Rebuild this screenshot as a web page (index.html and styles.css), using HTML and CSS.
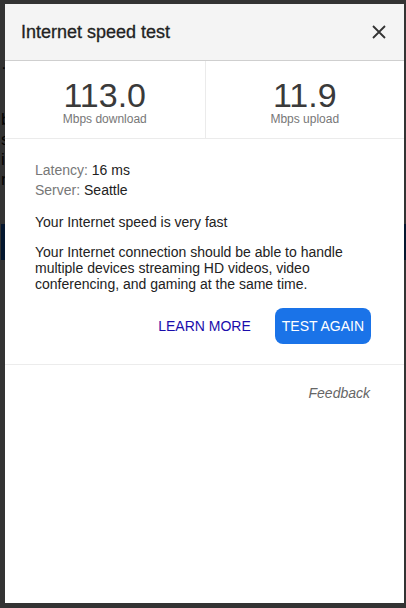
FILE: index.html
```html
<!DOCTYPE html>
<html lang="en">
<head>
  <meta charset="UTF-8" />
  <meta name="viewport" content="width=device-width, initial-scale=1.0"/>
  <title>Internet speed test</title>
  <link rel="stylesheet" href="styles.css">
</head>
<body>

  <!-- halaman di belakang dialog -->
  <div class="page">
    <div class="page-dot">·</div>
    <div class="page-lines">
      <div>b</div>
      <div>s</div>
      <div>i</div>
      <div>r</div>
    </div>
    <div class="page-band"></div>
  </div>

  <!-- dialog speed test -->
  <div class="overlay">
    <div class="dialog">
      <div class="dialog-head">
        <h1>Internet speed test</h1>
        <button class="close" aria-label="Close">
          <svg width="14" height="14" viewBox="0 0 14 14">
            <path d="M1 1 L13 13 M13 1 L1 13" stroke="#333" stroke-width="1.8" fill="none"/>
          </svg>
        </button>
      </div>

      <div class="stats">
        <div class="stat">
          <div class="stat-num">113.0</div>
          <div class="stat-label">Mbps download</div>
        </div>
        <div class="stat">
          <div class="stat-num">11.9</div>
          <div class="stat-label">Mbps upload</div>
        </div>
      </div>

      <div class="result">
        <div class="meta">
          <div><span class="meta-key">Latency:</span> 16 ms</div>
          <div><span class="meta-key">Server:</span> Seattle</div>
        </div>
        <p>Your Internet speed is very fast</p>
        <p>Your Internet connection should be able to handle multiple devices streaming HD videos, video conferencing, and gaming at the same time.</p>
        <div class="actions">
          <a class="learn" href="#">LEARN MORE</a>
          <button class="again">TEST AGAIN</button>
        </div>
      </div>

      <div class="foot">
        <a class="feedback" href="#">Feedback</a>
      </div>
    </div>
  </div>

</body>
</html>
```

FILE: styles.css
```css
body {
  margin: 0;
  font-family: 'Liberation Sans', Arial, sans-serif;
  background: #fff;
  color: #222;
}

.page {
  padding: 58px 0 0 1px;
  font-size: 17px;
  color: #111;
}

.page-dot {
  line-height: 20px;
}

.page-lines {
  margin-top: 32px;
  line-height: 20px;
}

.page-band {
  margin-top: 34px;
  height: 36px;
  background: #1a73e8;
}

.overlay {
  position: fixed;
  top: 0;
  left: 0;
  right: 0;
  bottom: 0;
  background: rgba(0, 0, 0, 0.8);
  display: flex;
  padding: 4px 2px 5px 5px;
}

.dialog {
  flex: 1;
  background: #fff;
  display: flex;
  flex-direction: column;
}

.dialog-head {
  height: 56px;
  background: #f4f4f4;
  border-bottom: 1px solid #cfcfcf;
  display: flex;
  align-items: center;
  justify-content: space-between;
  padding: 0 18px 0 16px;
}

.dialog-head h1 {
  margin: 0;
  font-size: 18px;
  font-weight: normal;
  color: #222;
  -webkit-text-stroke: 0.3px #222;
}

.close {
  border: none;
  background: none;
  padding: 0;
  width: 14px;
  height: 14px;
  display: flex;
  cursor: pointer;
}

.stats {
  display: grid;
  grid-template-columns: 1fr 1fr;
  border-bottom: 1px solid #ebebeb;
}

.stat {
  padding: 17px 0 12px;
  text-align: center;
}

.stat + .stat {
  border-left: 1px solid #ebebeb;
}

.stat-num {
  font-size: 34px;
  line-height: 34px;
  color: #3a3a3a;
}

.stat-label {
  font-size: 12px;
  line-height: 14px;
  color: #777;
}

.result {
  padding: 21px 33px 20px 30px;
  font-size: 14px;
  line-height: 16px;
  border-bottom: 1px solid #ececec;
}

.meta {
  line-height: 20px;
}

.meta-key {
  color: #777;
}

.result p {
  margin: 14px 0 0;
}

.actions {
  margin-top: 16px;
  display: flex;
  justify-content: flex-end;
  align-items: center;
  gap: 24px;
}

.learn {
  color: #1a0dab;
  text-decoration: none;
  font-size: 14px;
}

.again {
  height: 36px;
  padding: 0 7px;
  border: none;
  border-radius: 8px;
  background: #1a73e8;
  color: #fff;
  font-family: inherit;
  font-size: 14px;
  cursor: pointer;
}

.foot {
  padding: 20px 34px 0 30px;
  text-align: right;
  font-size: 14px;
  line-height: 16px;
}

.feedback {
  color: #666;
  font-style: italic;
  text-decoration: none;
}
```
